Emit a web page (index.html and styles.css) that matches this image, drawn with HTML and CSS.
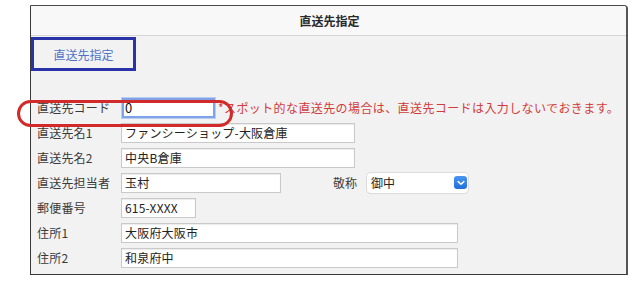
FILE: index.html
```html
<!DOCTYPE html>
<html lang="ja">
<head>
<meta charset="utf-8">
<title>直送先指定</title>
<link rel="stylesheet" href="styles.css">
</head>
<body>
<div class="stage">
  <div class="window">
    <div class="titlebar">直送先指定</div>
    <div class="content">
      <div class="tab">直送先指定</div>
      <div class="form">
        <div class="row">
          <span class="label">直送先コード</span>
          <input class="field focus w-code" value="0" readonly>
          <span class="note">*スポット的な直送先の場合は、直送先コードは入力しないでおきます。</span>
        </div>
        <div class="row">
          <span class="label">直送先名1</span>
          <input class="field w-name" value="ファンシーショップ-大阪倉庫" readonly>
        </div>
        <div class="row">
          <span class="label">直送先名2</span>
          <input class="field w-name" value="中央B倉庫" readonly>
        </div>
        <div class="row">
          <span class="label">直送先担当者</span>
          <input class="field w-tanto" value="玉村" readonly>
          <span class="sublabel">敬称</span>
          <div class="select">
            <span class="select-text">御中</span>
            <span class="select-btn">
              <svg width="8" height="6" viewBox="0 0 8 6"><path d="M1.2 1.6 L4 4.3 L6.8 1.6" fill="none" stroke="#fff" stroke-width="1.5" stroke-linecap="round" stroke-linejoin="round"/></svg>
            </span>
          </div>
        </div>
        <div class="row">
          <span class="label">郵便番号</span>
          <input class="field w-zip" value="615-XXXX" readonly>
        </div>
        <div class="row">
          <span class="label">住所1</span>
          <input class="field w-addr" value="大阪府大阪市" readonly>
        </div>
        <div class="row">
          <span class="label">住所2</span>
          <input class="field w-addr" value="和泉府中" readonly>
        </div>
      </div>
    </div>
  </div>
  <div class="oval"></div>
</div>
</body>
</html>
```

FILE: styles.css
```css
html, body {
  margin: 0;
  padding: 0;
  background: #ffffff;
}

body {
  font-family: "Noto Sans CJK JP", "Noto Sans", sans-serif;
  font-size: 12px;
  color: #333333;
  width: 640px;
  height: 283px;
  overflow: hidden;
}

.stage {
  position: relative;
  width: 640px;
  height: 283px;
}

.window {
  margin: 5px 0 0 30px;
  width: 598px;
  height: 270px;
  box-sizing: border-box;
  border-top: 1px solid #4a4a4a;
  border-left: 1px solid #3a3a3a;
  border-right: 2px solid #555555;
  border-bottom: 1px solid #3a3a3a;
  border-top-right-radius: 4px;
  background: #f2f2f2;
  overflow: hidden;
  display: flex;
  flex-direction: column;
}

.titlebar {
  height: 29px;
  flex: none;
  border-bottom: 1px solid #d6d6d6;
  background: #f8f8f8;
  display: flex;
  align-items: center;
  justify-content: center;
  font-weight: bold;
  font-size: 12px;
  color: #2a2a2a;
  padding-left: 2px;
}

.content {
  padding-top: 1px;
}

.tab {
  width: 105px;
  height: 34px;
  box-sizing: border-box;
  border: 3px solid #2a32a8;
  display: flex;
  align-items: center;
  justify-content: center;
  color: #4f72c8;
  font-size: 12px;
}

.form {
  margin-top: 24px;
  display: flex;
  flex-direction: column;
}

.row {
  height: 25px;
  display: flex;
  align-items: center;
  padding-left: 6px;
}

.label {
  width: 84px;
  flex: none;
  color: #3a3a3a;
  font-size: 12px;
  letter-spacing: 0.2px;
}

.field {
  height: 20px;
  box-sizing: border-box;
  border: 1px solid #c9c9c9;
  background: #ffffff;
  box-shadow: inset 0 1px 1px rgba(0, 0, 0, 0.08);
  font-family: "Noto Sans CJK JP", "Noto Sans", sans-serif;
  font-size: 12px;
  color: #222222;
  padding: 0 3px;
  margin: 0;
  outline: none;
  flex: none;
  letter-spacing: 0.2px;
}

.field.focus {
  border: 2px solid #7fa3e6;
  box-shadow: 0 0 0 1px #b9cdf2;
  padding: 0 1px;
  color: #111111;
  font-size: 13px;
}

.w-code { width: 93px; margin-left: 1px; }
.w-name { width: 234px; }
.w-tanto { width: 160px; }
.w-zip { width: 75px; }
.w-addr { width: 337px; }

.note {
  margin-left: 3px;
  color: #d13b3b;
  font-size: 12px;
  letter-spacing: 0.4px;
  white-space: nowrap;
}

.sublabel {
  margin-left: 52px;
  width: 34px;
  color: #3a3a3a;
}

.select {
  width: 101px;
  height: 20px;
  box-sizing: border-box;
  background: #ffffff;
  border-radius: 4px;
  box-shadow: 0 0 0 1px #dcdcdc, 0 1px 1px rgba(0, 0, 0, 0.1);
  display: flex;
  align-items: center;
  justify-content: space-between;
  padding: 0 1px 0 4px;
}

.select-text {
  color: #222222;
}

.select-btn {
  width: 13px;
  height: 13px;
  border-radius: 3px;
  background: linear-gradient(#4a95f0, #1f6fdc);
  display: flex;
  align-items: center;
  justify-content: center;
}

.oval {
  position: absolute;
  left: 17px;
  top: 95px;
  width: 216px;
  height: 27px;
  box-sizing: border-box;
  border: 3px solid #d22a2a;
  border-radius: 14px;
}
```
